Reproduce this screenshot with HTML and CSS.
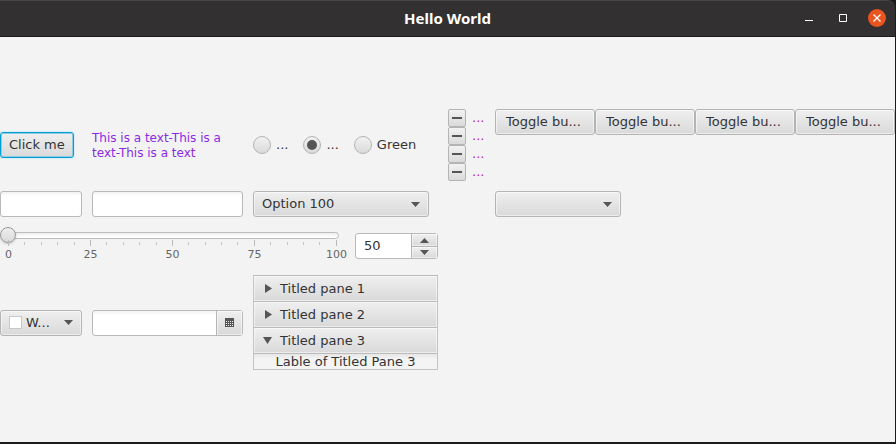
FILE: index.html
```html
<!DOCTYPE html>
<html lang="en">
<head>
<meta charset="utf-8">
<title>Hello World</title>
<link rel="stylesheet" href="styles.css">
</head>
<body>
<div class="window">
  <header class="titlebar">
    <h1 class="title">Hello World</h1>
    <div class="window-actions">
      <button class="window-button" aria-label="Minimize"><svg width="18" height="18" viewBox="0 0 18 18"><path d="M5 11.5h8" stroke="#fff"/></svg></button>
      <button class="window-button" aria-label="Maximize"><svg width="18" height="18" viewBox="0 0 18 18"><path d="M5.5 5.5h7v7h-7z" fill="none" stroke="#fff"/></svg></button>
      <button class="window-button close" aria-label="Close"><svg width="18" height="18" viewBox="0 0 18 18"><path d="M5.5 5.500l7 7M12.500 5.500l-7 7" stroke="#fff" stroke-width="1.300"/></svg></button>
    </div>
  </header>
  <main class="content">
    <button class="button focused">Click me</button>
    <p class="note">This is a text-This is a text-This is a text</p>
    <div class="radios">
      <label class="option"><input class="radio" type="radio" name="color">...</label>
      <label class="option"><input class="radio" type="radio" name="color" checked>...</label>
      <label class="option"><input class="radio" type="radio" name="color">Green</label>
    </div>
    <div class="checks">
      <label class="check-row"><input class="check" type="checkbox">...</label>
      <label class="check-row"><input class="check" type="checkbox">...</label>
      <label class="check-row"><input class="check" type="checkbox">...</label>
      <label class="check-row"><input class="check" type="checkbox">...</label>
    </div>
    <div class="toggles">
      <button class="button toggle">Toggle bu...</button>
      <button class="button toggle">Toggle bu...</button>
      <button class="button toggle">Toggle bu...</button>
      <button class="button toggle">Toggle bu...</button>
    </div>

    <input class="field" type="text" aria-label="Text">
    <input class="field" type="password" aria-label="Password">
    <div class="combo combo-wide">
      <select class="button select" aria-label="Option"><option>Option 100</option></select>
      <svg class="arrow" width="9" height="5" viewBox="0 0 9 5"><path d="M0 0h9L4.500 5z"/></svg>
    </div>
    <div class="combo combo-narrow">
      <select class="button select" aria-label="Choice"><option></option></select>
      <svg class="arrow" width="9" height="5" viewBox="0 0 9 5"><path d="M0 0h9L4.500 5z"/></svg>
    </div>

    <div class="range-row">
      <div class="slider">
        <div class="range-box">
          <span class="track"></span>
          <input class="range" type="range" min="0" max="100" value="0" aria-label="Value">
        </div>
        <div class="ticks">
          <i class="major"></i><i></i><i></i><i></i><i></i><i class="major"></i><i></i><i></i><i></i><i></i><i class="major"></i><i></i><i></i><i></i><i></i><i class="major"></i><i></i><i></i><i></i><i></i><i class="major"></i>
        </div>
        <div class="scale"><span>0</span><span>25</span><span>50</span><span>75</span><span>100</span></div>
      </div>
      <div class="spinner">
        <input class="spinner-value" type="text" value="50" aria-label="Amount">
        <div class="steps">
          <button class="step" aria-label="Increase"><svg width="9" height="5" viewBox="0 0 9 5"><path d="M0 5h9L4.500 0z"/></svg></button>
          <button class="step" aria-label="Decrease"><svg width="9" height="5" viewBox="0 0 9 5"><path d="M0 0h9L4.500 5z"/></svg></button>
        </div>
      </div>
    </div>

    <button class="button picker"><span class="swatch"></span><span class="picker-text">W...</span><svg width="9" height="5" viewBox="0 0 9 5"><path d="M0 0h9L4.500 5z"/></svg></button>
    <div class="date">
      <input class="date-value" type="text" aria-label="Date">
      <button class="date-button" aria-label="Open calendar"><svg width="9" height="9" viewBox="0 0 9 9"><path d="M0 0h9v9H0z"/><path d="M1 3.500h7M1 5.500h7M1 7.500h7" stroke="#eee" stroke-dasharray="1 1"/></svg></button>
    </div>
    <div class="accordion">
      <button class="pane-title" aria-expanded="false"><svg width="9" height="9" viewBox="0 0 9 9"><path d="M2 0l7 4.500L2 9z"/></svg>Titled pane 1</button>
      <button class="pane-title" aria-expanded="false"><svg width="9" height="9" viewBox="0 0 9 9"><path d="M2 0l7 4.500L2 9z"/></svg>Titled pane 2</button>
      <button class="pane-title" aria-expanded="true"><svg width="9" height="9" viewBox="0 0 9 9"><path d="M0 1h9L4.500 8z"/></svg>Titled pane 3</button>
      <div class="pane-body">Lable of Titled Pane 3</div>
    </div>
  </main>
</div>
</body>
</html>
```
FILE: styles.css
```css
* {
  box-sizing: border-box;
}

body {
  margin: 0;
  background: #1c1b1c;
  color: #333;
  font: 13px/16px "DejaVu Sans", sans-serif;
}

button,
input,
select {
  margin: 0;
  color: inherit;
  font: inherit;
}

svg {
  display: block;
  flex: none;
  fill: #555;
}

.window {
  display: flex;
  flex-direction: column;
  min-height: 100vh;
  padding: 0 1px 2px 0;
}

.titlebar {
  display: grid;
  grid-template-columns: 1fr auto 1fr;
  align-items: center;
  height: 37px;
  padding: 0 9px 1px 9px;
  border-top: 1px solid #474546;
  border-bottom: 1px solid #1d1b1c;
  border-top-right-radius: 8px;
  background: #323031;
}

.title {
  grid-column: 2;
  margin: 0;
  color: #fff;
  font: bold 15px/20px "Noto Sans", sans-serif;
}

.window-actions {
  display: flex;
  justify-content: flex-end;
  gap: 16px;
}

.window-button {
  padding: 0;
  border: 0;
  border-radius: 50%;
  background: none;
}

.close {
  background: #e95420;
}

.content {
  flex: 1;
  display: grid;
  grid-template-columns: 82px 151px 185px 37px 1fr;
  grid-template-rows: 72px 26px 38px 95px;
  gap: 10px;
  align-content: center;
  align-items: center;
  background: #f3f3f3;
}

.button,
.pane-title,
.step,
.date-button {
  background: linear-gradient(#efefef, #d9d9d9);
  box-shadow: inset 0 0 0 1px rgba(255, 255, 255, 0.5);
}

.button {
  height: 26px;
  padding: 0 8px;
  border: 1px solid #b4b4b4;
  border-radius: 3px;
}

.focused {
  justify-self: start;
  border-color: #039ed3;
  box-shadow: inset 0 0 0 1px #8ccbe2, 0 0 1px 1px #d5edf5;
}

.note {
  margin: 0;
  padding-top: 1px;
  color: #8a2be2;
  font-size: 12px;
  line-height: 15px;
}

.radios {
  display: flex;
  gap: 15px;
}

.option,
.check-row {
  display: flex;
  align-items: center;
  gap: 5px;
}

.radio,
.check {
  appearance: none;
  display: grid;
  place-items: center;
  flex: none;
  width: 18px;
  height: 18px;
  border: 1px solid #b4b4b4;
  background: linear-gradient(#f2f2f2, #dadada);
}

.radio {
  border-radius: 50%;
}

.radio:checked::before {
  content: "";
  width: 10px;
  height: 10px;
  border-radius: 50%;
  background: #555;
}

.check {
  border-radius: 2px;
}

.check::before {
  content: "";
  width: 10px;
  height: 2px;
  background: #555;
}

.check-row {
  gap: 6px;
  color: #b01fb0;
}

.toggles {
  display: flex;
  align-self: start;
}

.toggle {
  flex: 1;
  padding: 0 10px;
  text-align: left;
}

.field,
.spinner,
.date {
  width: 100%;
  height: 26px;
  border: 1px solid #b9b9b9;
  border-radius: 3px;
  background: linear-gradient(#f2f2f2, #fff 4px);
}

.field {
  padding: 0 8px;
}

.combo {
  display: grid;
  align-items: center;
}

.combo > * {
  grid-area: 1 / 1;
}

.combo-wide {
  width: 176px;
}

.combo-narrow {
  grid-column: 5;
  width: 126px;
}

.select {
  appearance: none;
  width: 100%;
}

.arrow {
  justify-self: end;
  margin-right: 9px;
  pointer-events: none;
}

.range-row {
  grid-column: 1 / 4;
  display: flex;
  align-items: center;
  gap: 10px;
  height: 38px;
}

.slider {
  flex: 1;
  align-self: start;
}

.range-box {
  display: grid;
  align-items: center;
}

.range-box > * {
  grid-area: 1 / 1;
}

.track {
  height: 7px;
  margin: 0 6px;
  border: 1px solid #bbb;
  border-radius: 4px;
  background: linear-gradient(#ededed, #fff 4px);
}

.range {
  appearance: none;
  display: block;
  width: 100%;
  height: 16px;
  background: none;
}

.range::-webkit-slider-thumb {
  appearance: none;
  width: 16px;
  height: 16px;
  border: 1px solid #999;
  border-radius: 50%;
  background: linear-gradient(#eee, #d9d9d9);
  box-shadow: 0 1px 2px rgba(0, 0, 0, 0.2);
}

.ticks,
.scale {
  display: flex;
  justify-content: space-between;
  margin: 0 8px;
}

.ticks {
  align-items: center;
  height: 6px;
  margin-top: -3px;
}

.ticks i {
  width: 1px;
  height: 3px;
  background: #c4c4c4;
}

.ticks .major {
  height: 6px;
  background: #bbb;
}

.scale {
  color: #666;
  font-size: 11px;
  line-height: 18px;
}

.scale span {
  display: flex;
  justify-content: center;
  width: 1px;
}

.spinner {
  display: flex;
  align-self: end;
  width: 83px;
  margin-bottom: 6px;
  background: #fff;
}

.spinner-value,
.date-value {
  flex: 1;
  min-width: 0;
  padding: 0 8px;
  border: 0;
  background: none;
}

.steps {
  display: grid;
  grid-template-rows: 1fr 1fr;
  width: 26px;
  border-left: 1px solid #b4b4b4;
}

.step {
  display: grid;
  place-items: center;
  padding: 0;
  border: 0;
}

.step + .step {
  border-top: 1px solid #b4b4b4;
}

.picker {
  grid-column: 1;
  display: flex;
  align-items: center;
  gap: 4px;
  width: 100%;
  padding-right: 8px;
}

.swatch {
  width: 13px;
  height: 13px;
  border: 1px solid #c8c8c8;
  background: #fff;
}

.picker-text {
  flex: 1;
  text-align: left;
}

.date {
  display: flex;
}

.date-button {
  display: grid;
  place-items: center;
  width: 26px;
  padding: 0;
  border: 0;
  border-left: 1px solid #b4b4b4;
}

.accordion {
  border: 1px solid #c4c4c4;
  border-top-color: #bbb;
}

.pane-title {
  display: flex;
  align-items: center;
  gap: 8px;
  width: 100%;
  height: 26px;
  padding: 0 9px;
  border: 0;
  border-bottom: 1px solid #bbb;
}

.pane-body {
  height: 15px;
  background: linear-gradient(#e6e6e6, #f4f4f4 5px);
  line-height: 15px;
  text-align: center;
}
```
